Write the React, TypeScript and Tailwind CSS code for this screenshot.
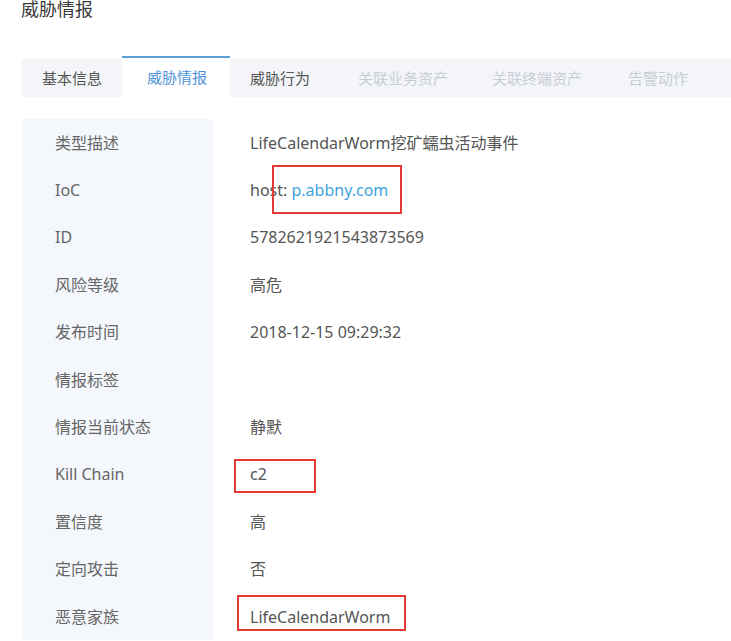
import React from "react";

const rows: { label: string; value: React.ReactNode }[] = [
  { label: "类型描述", value: "LifeCalendarWorm挖矿蠕虫活动事件" },
  {
    label: "IoC",
    value: (
      <span>
        host: <span className="text-[#3ea3dc]">p.abbny.com</span>
      </span>
    ),
  },
  { label: "ID", value: "5782621921543873569" },
  { label: "风险等级", value: "高危" },
  { label: "发布时间", value: "2018-12-15 09:29:32" },
  { label: "情报标签", value: "" },
  { label: "情报当前状态", value: "静默" },
  { label: "Kill Chain", value: "c2" },
  { label: "置信度", value: "高" },
  { label: "定向攻击", value: "否" },
  { label: "恶意家族", value: "LifeCalendarWorm" },
];

const tabs = [
  { name: "基本信息", state: "normal", pad: "pl-[20px] pr-[20px]" },
  { name: "威胁情报", state: "active", pad: "pl-[25px] pr-[23px]" },
  { name: "威胁行为", state: "normal", pad: "pl-[20px] pr-[24px]" },
  { name: "关联业务资产", state: "faded", pad: "pl-[24px] pr-[22px]" },
  { name: "关联终端资产", state: "faded", pad: "pl-[22px] pr-[23px]" },
  { name: "告警动作", state: "faded", pad: "pl-[23px] pr-[22px]" },
];

export default function App() {
  return (
    <div
      className="relative w-[731px] h-[641px] overflow-hidden bg-white"
      style={{ fontFamily: '"Noto Sans", "Noto Sans CJK SC", sans-serif' }}
    >
      <div className="pl-[21px] text-[18px] leading-[18px] text-[#3a3a3a]">威胁情报</div>

      <div className="ml-[22px] mt-[41px] h-[38px] bg-[#f3f5f8] flex items-stretch text-[15px]">
        {tabs.map((t) => (
          <div
            key={t.name}
            className={
              t.state === "active"
                ? `-mt-[3px] h-[41px] bg-white border-t-2 border-[#5d9fd3] flex items-center ${t.pad} text-[#4f93d8]`
                : t.state === "faded"
                ? `flex items-center ${t.pad} text-[#c9cdd5]`
                : `flex items-center ${t.pad} text-[#555]`
            }
          >
            {t.name}
          </div>
        ))}
      </div>

      <div className="mt-[22px] text-[16px]">
        {rows.map((r) => (
          <div key={r.label} className="flex h-[47.4px]">
            <div className="ml-[22px] w-[191px] bg-[#f4f7fb] pl-[33px] flex items-center text-[#666]">
              {r.label}
            </div>
            <div className="pl-[37px] flex items-center text-[#555]">{r.value}</div>
          </div>
        ))}
      </div>

      <div className="absolute left-[272px] top-[165px] w-[130px] h-[49px] border-2 border-[#e53935]" />
      <div className="absolute left-[234px] top-[459px] w-[82px] h-[34px] border-2 border-[#e53935]" />
      <div className="absolute left-[237px] top-[595px] w-[169px] h-[36px] border-2 border-[#e53935]" />
    </div>
  );
}
